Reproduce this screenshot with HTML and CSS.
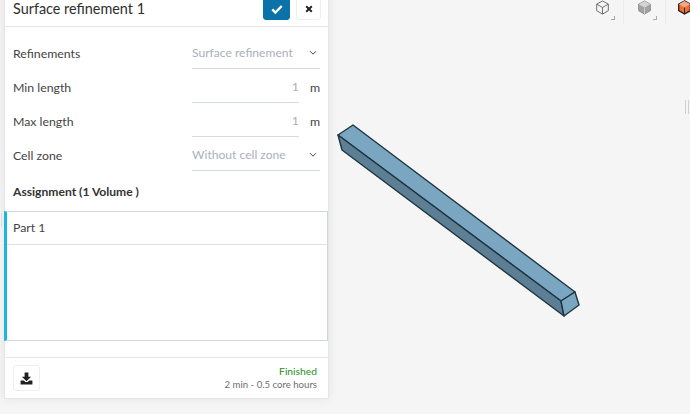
FILE: index.html
```html
<!DOCTYPE html>
<html lang="en">
<head>
  <meta charset="UTF-8" />
  <title>Surface refinement 1</title>
  <link rel="stylesheet" href="styles.css">
</head>
<body>
  <div class="app">
    <div class="side-handle"></div>

    <!-- settings panel -->
    <div class="panel">
      <div class="panel-head">
        <div class="title">Surface refinement 1</div>
        <button class="btn btn-ok">
          <svg width="12" height="12" viewBox="0 0 14 14"><path d="M1.5 7.5l3.6 3.6 7.4-7.6" fill="none" stroke="#fff" stroke-width="2.8"/></svg>
        </button>
        <button class="btn btn-close">
          <svg width="8" height="8" viewBox="0 0 10 10"><path d="M1.5 1.5l7 7M8.5 1.5l-7 7" fill="none" stroke="#222" stroke-width="2.4"/></svg>
        </button>
      </div>

      <div class="form">
        <div class="row">
          <div class="label">Refinements</div>
          <div class="field select">
            <span class="value">Surface refinement</span>
            <svg class="chev" width="8" height="6" viewBox="0 0 8 6"><path d="M1 1.2l3 3 3-3" fill="none" stroke="#444" stroke-width="1"/></svg>
          </div>
        </div>
        <div class="row">
          <div class="label">Min length</div>
          <div class="field number"><span class="value">1</span></div>
          <div class="unit">m</div>
        </div>
        <div class="row">
          <div class="label">Max length</div>
          <div class="field number"><span class="value">1</span></div>
          <div class="unit">m</div>
        </div>
        <div class="row">
          <div class="label">Cell zone</div>
          <div class="field select">
            <span class="value">Without cell zone</span>
            <svg class="chev" width="8" height="6" viewBox="0 0 8 6"><path d="M1 1.2l3 3 3-3" fill="none" stroke="#444" stroke-width="1"/></svg>
          </div>
        </div>
      </div>

      <div class="assign-title">Assignment (1 Volume )</div>
      <div class="assign-list">
        <div class="assign-item">Part 1</div>
      </div>

      <div class="panel-foot">
        <button class="btn btn-save">
          <svg width="13" height="13" viewBox="0 0 13 13"><path d="M4.6 0.5h3.8v4.3h2.7L6.5 9.2 1.9 4.8h2.7z" fill="#222"/><path d="M0.6 8.6h3.3l1.5 1.5h2.2l1.5-1.5h3.3v3.9H0.6z" fill="#222"/></svg>
        </button>
        <div class="status">
          <div class="done">Finished</div>
          <div class="cost">2 min - 0.5 core hours</div>
        </div>
      </div>
    </div>

    <!-- 3d viewer -->
    <div class="viewer">
      <svg class="model" width="361" height="414" viewBox="329 0 361 414">
        <g stroke="#1f3540" stroke-width="1.4" stroke-linejoin="round">
          <polygon points="338,135 353,125 575,292 561,301" fill="#7ba6c2"/>
          <polygon points="338,135 561,301 564,316 342,150" fill="#5d7f96"/>
          <polygon points="561,301 575,292 579,305 564,316" fill="#7ba6c2"/>
        </g>
      </svg>

      <div class="toolbar">
        <div class="tool">
          <svg width="15" height="15" viewBox="0 0 16 16"><g fill="none" stroke="#666" stroke-width="1"><path d="M8 1l6.2 3.4v7L8 15l-6.2-3.6v-7z"/><path d="M1.8 4.4L8 8l6.2-3.6M8 8v7"/></g></svg>
          <span class="corner"></span>
        </div>
        <div class="tool">
          <svg width="15" height="15" viewBox="0 0 16 16"><path d="M8 1l6.2 3.4v7L8 15l-6.2-3.6v-7z" fill="#a3a3a3" stroke="#888"/><path d="M1.8 4.4L8 8l6.2-3.6L8 1z" fill="#d4d4d4"/><path d="M8 8v7" stroke="#ccc"/></svg>
          <span class="corner"></span>
        </div>
        <div class="tool tool-last">
          <svg width="15" height="15" viewBox="0 0 16 16"><path d="M8 1l6.2 3.4v7L8 15l-6.2-3.6v-7z" fill="#ec6f35" stroke="#222" stroke-width="1.4"/><path d="M1.8 4.4L8 8l6.2-3.6L8 1z" fill="#f6a783"/><path d="M8 8v7" stroke="#222"/></svg>
        </div>
      </div>

      <div class="handle"></div>
    </div>
  </div>
</body>
</html>
```

FILE: styles.css
```css
* {
  margin: 0;
  padding: 0;
  box-sizing: border-box;
}

body {
  background: #f5f5f5;
  font-family: Lato, sans-serif;
  font-size: 12.3px;
  color: #444;
  overflow: hidden;
}

.app {
  position: relative;
  display: flex;
  height: 414px;
  padding-left: 4px;
  align-items: flex-start;
}

/* panel starts above the window, the header buttons are cut off */
.panel {
  width: 325px;
  flex: none;
  margin-top: -10px;
  background: #fff;
  border: 1px solid #e6e6e6;
  border-top: 0;
  box-shadow: 0 0 10px rgba(0, 0, 0, 0.07);
}

.panel-head {
  display: flex;
  align-items: flex-start;
  gap: 6px;
  height: 37px;
  padding: 0 7px 0 8px;
  border-bottom: 1px solid #e3e5e8;
}

.title {
  flex: 1;
  margin-top: 11px;
  font-size: 14.4px;
  line-height: 16px;
  color: #2e2e2e;
}

.btn {
  display: flex;
  align-items: center;
  justify-content: center;
  background: #fff;
  border: 1px solid #eeeeee;
  border-radius: 3px;
}

.btn-ok {
  width: 27px;
  height: 30px;
  padding-top: 8px;
  background: #0a72a8;
  border-color: #0a72a8;
}

.btn-close {
  width: 25px;
  height: 30px;
  padding-top: 8px;
}

.form {
  padding: 10px 8px 0 8px;
}

.row {
  display: flex;
  align-items: flex-start;
  height: 34px;
}

.label {
  width: 179px;
  line-height: 33px;
}

.field {
  display: flex;
  align-items: center;
  height: 32px;
  border-bottom: 1px solid #d5d9e0;
  color: #a9b0ba;
}

.select {
  width: 128px;
  justify-content: space-between;
  padding-right: 3px;
  font-size: 12.1px;
}

.number {
  width: 107px;
  justify-content: flex-end;
}

.unit {
  width: 21px;
  line-height: 33px;
  text-align: right;
}

.assign-title {
  padding: 10px 8px 0 8px;
  height: 38px;
  line-height: 18px;
  font-weight: 700;
  font-size: 12.1px;
  color: #333;
}

.assign-list {
  height: 130px;
  background: #fff;
  border: 1px solid #cfd6dc;
  border-left: 3px solid #1db4e4;
  margin-left: -1px;
}

.assign-item {
  height: 33px;
  line-height: 32px;
  padding-left: 6px;
  border-bottom: 1px solid #dfe2e8;
}

.panel-foot {
  display: flex;
  justify-content: space-between;
  align-items: center;
  height: 41px;
  margin-top: 16px;
  padding: 0 11px 0 8px;
  border-top: 1px solid #e6e6e6;
}

.btn-save {
  width: 27px;
  height: 26px;
}

.status {
  text-align: right;
  font-size: 9.6px;
  line-height: 14px;
}

.done {
  color: #1e8f1e;
  font-size: 10.3px;
}

.cost {
  color: #6e6e6e;
}

.viewer {
  flex: 1;
  position: relative;
  height: 414px;
}

.model {
  position: absolute;
  left: 0;
  top: 0;
}

.toolbar {
  position: absolute;
  top: 0;
  right: -18px;
  display: flex;
}

.tool {
  position: relative;
  display: flex;
  justify-content: center;
  width: 42px;
  height: 24px;
  border-right: 1px solid #ebebeb;
}

.tool-last {
  border-right: 0;
  justify-content: flex-start;
  padding-left: 11px;
}

.corner {
  position: absolute;
  right: 8px;
  bottom: 4px;
  width: 4px;
  height: 4px;
  border-right: 1px solid #aaa;
  border-bottom: 1px solid #aaa;
}

.handle {
  position: absolute;
  right: 1px;
  top: 100px;
  width: 4px;
  height: 14px;
  border-left: 1px solid #cfcfcf;
  border-right: 1px solid #cfcfcf;
}

.side-handle {
  position: absolute;
  left: 1px;
  top: 213px;
  width: 1px;
  height: 14px;
  background: #dcdcdc;
}
```
